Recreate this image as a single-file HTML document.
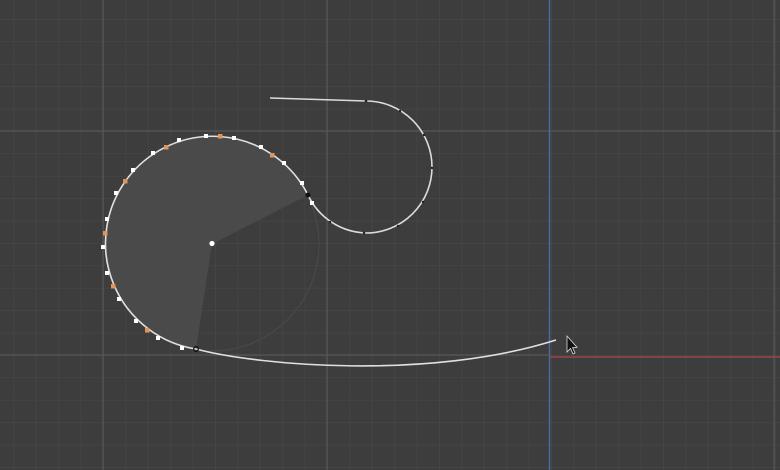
<!DOCTYPE html>
<html><head><meta charset="utf-8"><style>
html,body{margin:0;padding:0;background:#3d3d3d;width:780px;height:470px;overflow:hidden}
svg{display:block}
</style></head><body>
<svg width="780" height="470" viewBox="0 0 780 470" xmlns="http://www.w3.org/2000/svg">
<defs>
<pattern id="g" patternUnits="userSpaceOnUse" x="103" y="131" width="22.4" height="22.4">
<path d="M0 0V22.4M0 0H22.4" stroke="#474747" stroke-width="1.2" fill="none"/>
</pattern>
</defs>
<rect width="780" height="470" fill="#3d3d3d"/>
<rect width="780" height="470" fill="url(#g)"/>
<g stroke="#575757" stroke-width="1.2">
<line x1="103" y1="0" x2="103" y2="470"/>
<line x1="327" y1="0" x2="327" y2="470"/>
<line x1="774" y1="0" x2="774" y2="470"/>
<line x1="0" y1="131" x2="780" y2="131"/>
<line x1="0" y1="355" x2="550" y2="355"/>
</g>
<line x1="549.5" y1="0" x2="549.5" y2="470" stroke="#4a69a6" stroke-width="1.4"/>
<line x1="550" y1="357" x2="780" y2="357" stroke="#9a4848" stroke-width="1.4"/>
<circle cx="212" cy="244" r="107" fill="none" stroke="#4a4a4a" stroke-width="1"/>
<path d="M212 244 L308 195 A107 107 0 1 0 196 349 Z" fill="#4a4a4a"/>
<path d="M308 195 A107 107 0 1 0 196 349" fill="none" stroke="#e0e0e0" stroke-width="1.6"/>
<path d="M270 98 L366 101 A66 66 0 0 1 366 233 A66 66 0 0 1 308 195" fill="none" stroke="#dcdcdc" stroke-width="1.6"/>
<path d="M196 349 C 260 366, 430 380, 556 340" fill="none" stroke="#e0e0e0" stroke-width="1.6"/>
<g fill="#222"><circle cx="366" cy="101" r="1.3"/><circle cx="400" cy="111" r="1.2"/><circle cx="424" cy="135" r="1.2"/><circle cx="432" cy="168" r="1.2"/><circle cx="423" cy="202" r="1.2"/><circle cx="398" cy="226" r="1.2"/><circle cx="364" cy="233" r="1.2"/><circle cx="330" cy="222" r="1.2"/></g>
<g fill="#fff">
<rect x="204" y="134" width="4" height="4"/><rect x="232" y="136" width="4" height="4"/><rect x="259" y="145" width="4" height="4"/><rect x="282" y="161" width="4" height="4"/><rect x="300" y="181" width="4" height="4"/><rect x="310" y="201" width="4" height="4"/><rect x="177" y="138" width="4" height="4"/><rect x="151" y="151" width="4" height="4"/><rect x="131" y="168" width="4" height="4"/><rect x="114" y="191" width="4" height="4"/><rect x="105" y="217" width="4" height="4"/><rect x="101" y="245" width="4" height="4"/><rect x="105" y="271" width="4" height="4"/><rect x="117" y="297" width="4" height="4"/><rect x="134" y="319" width="4" height="4"/><rect x="156" y="336" width="4" height="4"/><rect x="180" y="346" width="4" height="4"/>
</g>
<g fill="#e0955a">
<rect x="218" y="134" width="4.5" height="4.5"/><rect x="270" y="153" width="4.5" height="4.5"/><rect x="164" y="145" width="4.5" height="4.5"/><rect x="123" y="179" width="4.5" height="4.5"/><rect x="103" y="231" width="4.5" height="4.5"/><rect x="111" y="284" width="4.5" height="4.5"/><rect x="145" y="328" width="4.5" height="4.5"/>
</g>
<circle cx="308" cy="195" r="2.5" fill="#111"/>
<circle cx="196" cy="349" r="2.3" fill="none" stroke="#111" stroke-width="1.3"/>
<circle cx="212" cy="243.5" r="2.6" fill="#fff"/>
<path d="M567 336 L567 352 L570.5 348.5 L573 354 L575 353 L572.6 347.6 L577 347.3 Z" fill="#111" stroke="#ddd" stroke-width="0.8"/>
</svg>
</body></html>
